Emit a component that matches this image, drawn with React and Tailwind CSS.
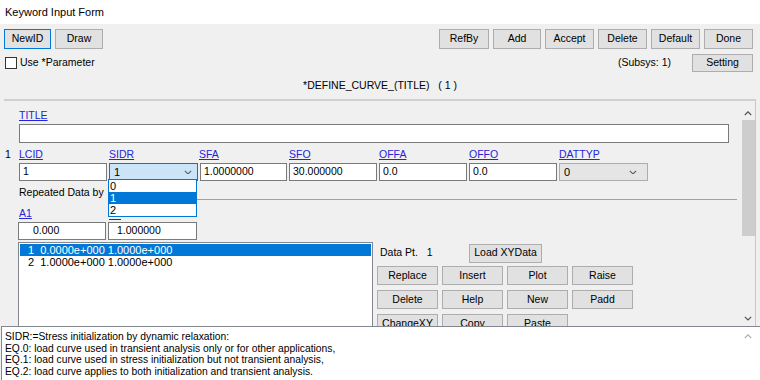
import React from "react";

const Btn = ({ children, w, h = "h-[19px]", extra = "" }) => (
  <div
    className={`${w} ${h} ${extra} flex items-center justify-center border border-[#adadad] bg-[#e1e1e1] text-[#000] shrink-0`}
  >
    {children}
  </div>
);

const Chev = ({ up = false, color = "#606060", size = 8 }) => (
  <svg width={size} height={size * 0.6} viewBox="0 0 10 6">
    <polyline
      points={up ? "1,5 5,1 9,5" : "1,1 5,5 9,1"}
      fill="none"
      stroke={color}
      strokeWidth="1.4"
    />
  </svg>
);

const Link = ({ children, w }) => (
  <div className={`${w} shrink-0 h-[13px] leading-[13px] text-[#2424d8] underline underline-offset-[1px]`}>
    {children}
  </div>
);

const Input = ({ children, w = "w-[88px]", extra = "" }) => (
  <div
    className={`${w} h-[18px] shrink-0 border border-[#7a7a7a] bg-white flex items-center pl-[3px] ${extra}`}
  >
    {children}
  </div>
);

export default function App() {
  return (
    <div
      className="w-[760px] h-[380px] bg-[#f0f0f0] flex flex-col overflow-hidden text-[10.5px] text-black"
      style={{ fontFamily: '"Liberation Sans", Arial, sans-serif' }}
    >
      {/* title bar */}
      <div className="h-[24px] shrink-0 bg-white flex items-center pl-[5px] text-[11px]">Keyword Input Form</div>

      {/* toolbar */}
      <div className="mt-[5px] h-[20px] shrink-0 flex items-center px-[4px]">
        <div className="flex gap-[4px]">
          <Btn w="w-[47px]" h="h-[20px]" extra="!border-[#0078d7]">NewID</Btn>
          <Btn w="w-[48px]" h="h-[20px]">Draw</Btn>
        </div>
        <div className="ml-auto mr-[3px] flex gap-[4px]">
          <Btn w="w-[50px]" h="h-[20px]">RefBy</Btn>
          <Btn w="w-[48px]" h="h-[20px]">Add</Btn>
          <Btn w="w-[49px]" h="h-[20px]">Accept</Btn>
          <Btn w="w-[49px]" h="h-[20px]">Delete</Btn>
          <Btn w="w-[49px]" h="h-[20px]">Default</Btn>
          <Btn w="w-[49px]" h="h-[20px]">Done</Btn>
        </div>
      </div>

      {/* row 2 */}
      <div className="mt-[5px] h-[18px] shrink-0 flex items-center pl-[5px] pr-[7px]">
        <div className="w-[12px] h-[12px] border border-[#333] bg-white" />
        <div className="ml-[3px]">Use *Parameter</div>
        <div className="ml-auto">(Subsys: 1)</div>
        <Btn w="w-[61px]" h="h-[18px]" extra="ml-[21px]">Setting</Btn>
      </div>

      {/* row 3 */}
      <div className="mt-[7px] h-[14px] shrink-0 flex items-center justify-center whitespace-pre">
        {"*DEFINE_CURVE_(TITLE)   ( 1 )"}
      </div>

      {/* separator */}
      <div className="mt-[6px] mx-[4px] h-[2px] shrink-0 bg-[#cfcfcf]" />

      {/* main scroll area */}
      <div className="h-[225px] shrink-0 flex">
        <div className="relative flex-1 flex flex-col pl-[5px] overflow-hidden">
          {/* TITLE */}
          <div className="mt-[8px] pl-[14px] shrink-0">
            <Link w="w-[40px]">TITLE</Link>
          </div>
          <div className="mt-[2px] ml-[14px] w-[710px] h-[19px] shrink-0 border border-[#7a7a7a] bg-white" />

          {/* labels row */}
          <div className="mt-[5px] flex h-[13px] shrink-0 items-center">
            <div className="w-[14px] shrink-0">1</div>
            <div className="flex gap-[2px]">
              <Link w="w-[88px]">LCID</Link>
              <Link w="w-[88px]">SIDR</Link>
              <Link w="w-[88px]">SFA</Link>
              <Link w="w-[88px]">SFO</Link>
              <Link w="w-[88px]">OFFA</Link>
              <Link w="w-[88px]">OFFO</Link>
              <Link w="w-[88px]">DATTYP</Link>
            </div>
          </div>

          {/* inputs row */}
          <div className="mt-[2px] ml-[14px] flex gap-[2px] shrink-0">
            <Input>1</Input>
            <div className="w-[89px] h-[18px] shrink-0 border border-[#0078d7] bg-[#cce4f7] flex items-center pl-[4px] pr-[5px]">
              <span className="text-[11px]">1</span>
              <span className="ml-auto">
                <Chev />
              </span>
            </div>
            <Input w="w-[87px]">1.0000000</Input>
            <Input>30.000000</Input>
            <Input>0.0</Input>
            <Input>0.0</Input>
            <div className="w-[89px] h-[18px] shrink-0 border border-[#adadad] bg-[#e5e5e5] flex items-center pl-[4px] pr-[10px]">
              <span className="text-[11px]">0</span>
              <span className="ml-auto">
                <Chev />
              </span>
            </div>
          </div>

          {/* repeated data */}
          <div className="mt-[5px] ml-[14px] mr-[4px] h-[15px] shrink-0 flex items-end">
            <div className="w-[89px] leading-[13px] mb-[2px] whitespace-nowrap">Repeated Data by</div>
            <div className="flex-1 ml-[89px] h-[1px] mb-[1px] bg-[#a0a0a0]" />
          </div>

          {/* A1 */}
          <div className="mt-[6px] ml-[14px] flex gap-[2px] shrink-0">
            <Link w="w-[88px]">A1</Link>
            <div className="w-[12px] h-[13px] border-b border-[#2424d8]" />
          </div>
          <div className="mt-[2px] ml-[13px] flex gap-[2px] shrink-0">
            <Input extra="!pl-[14px]">0.000</Input>
            <Input w="w-[89px]" extra="!pl-[8px]">1.000000</Input>
          </div>

          {/* list + buttons */}
          <div className="mt-[2px] ml-[13px] flex shrink-0">
            <div className="w-[355px] h-[100px] shrink-0 border border-[#828790] bg-white pt-[1px] px-[1px] text-[11px]">
              <div className="h-[12px] bg-[#0078d7] text-white flex items-center whitespace-pre pl-[8px]">
                {"1  0.0000e+000 1.0000e+000"}
              </div>
              <div className="h-[12px] flex items-center whitespace-pre pl-[8px]">
                {"2  1.0000e+000 1.0000e+000"}
              </div>
            </div>
            <div className="ml-[4px] flex flex-col">
              <div className="h-[20px] mt-[1px] flex items-center">
                <div className="w-[92px] pl-[3px] whitespace-pre">{"Data Pt.   1"}</div>
                <Btn w="w-[73px]" h="h-[19px]">Load XYData</Btn>
              </div>
              <div className="mt-[3px] grid grid-cols-[61px_61px_61px_61px] gap-x-[4px] gap-y-[5px]">
                <Btn w="w-[61px]">Replace</Btn>
                <Btn w="w-[61px]">Insert</Btn>
                <Btn w="w-[61px]">Plot</Btn>
                <Btn w="w-[61px]">Raise</Btn>
                <Btn w="w-[61px]">Delete</Btn>
                <Btn w="w-[61px]">Help</Btn>
                <Btn w="w-[61px]">New</Btn>
                <Btn w="w-[61px]">Padd</Btn>
                <Btn w="w-[61px]">ChangeXY</Btn>
                <Btn w="w-[61px]">Copy</Btn>
                <Btn w="w-[61px]">Paste</Btn>
              </div>
            </div>
          </div>

          {/* dropdown overlay */}
          <div className="absolute left-[108px] top-[78px] w-[89px] h-[38px] border border-[#0078d7] bg-white text-[11px] flex flex-col">
            <div className="h-[12px] flex items-center pl-[1px]">0</div>
            <div className="h-[12px] flex items-center pl-[1px] bg-[#0078d7] text-white">1</div>
            <div className="h-[12px] flex items-center pl-[1px]">2</div>
          </div>
        </div>

        {/* scrollbar */}
        <div className="w-[15px] shrink-0 mr-[4px] border-r border-[#c8c8c8] flex flex-col items-center pt-[10px]">
          <Chev up color="#505050" size={8} />
          <div className="mt-[4px] w-[13px] h-[116px] bg-[#cdcdcd]" />
          <div className="mt-auto mb-[5px]">
            <Chev color="#505050" size={8} />
          </div>
        </div>
      </div>

      {/* help panel */}
      <div className="flex-1 flex border-t border-l border-[#828790] bg-white ml-[1px]">
        <div className="flex-1 pl-[3px] pt-[4px] text-[10.3px] leading-[11.6px]">
          <div>SIDR:=Stress initialization by dynamic relaxation:</div>
          <div>EQ.0: load curve used in transient analysis only or for other applications,</div>
          <div>EQ.1: load curve used in stress initialization but not transient analysis,</div>
          <div>EQ.2: load curve applies to both initialization and transient analysis.</div>
        </div>
        <div className="w-[17px] mr-[4px] flex justify-center pt-[7px]">
          <Chev up color="#b0b0b0" size={8} />
        </div>
      </div>
    </div>
  );
}
